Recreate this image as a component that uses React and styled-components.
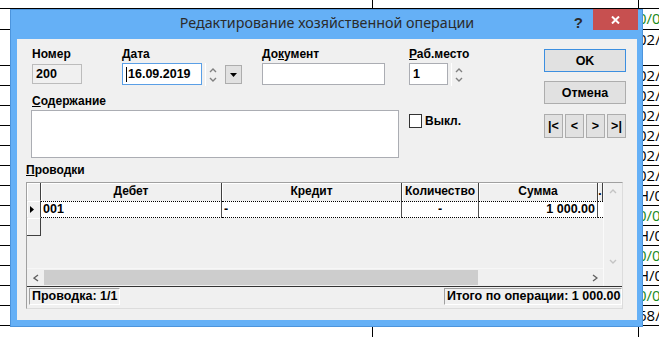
import React from 'react';
import styled, { createGlobalStyle } from 'styled-components';

const GlobalStyle = createGlobalStyle`
  html, body {
    margin: 0;
    padding: 0;
    background: #fff;
  }
  body {
    width: 659px;
    height: 337px;
    overflow: hidden;
    position: relative;
    font-family: "Liberation Sans", Arial, sans-serif;
  }
`;

// spreadsheet behind the dialog
const sheetRows = [
  { h: 9 },
  { h: 21, text: '0/0', green: true },
  { h: 36, text: '02/' },
  { h: 20, text: '02/' },
  { h: 20, text: '02/' },
  { h: 20, text: '02/' },
  { h: 20, text: '02/' },
  { h: 20, text: '02/' },
  { h: 20, text: '02/' },
  { h: 20, text: 'H/0' },
  { h: 20, text: '0/0', green: true },
  { h: 20, text: 'H/0' },
  { h: 20, text: '0/0', green: true },
  { h: 20, text: 'H/0' },
  { h: 20, text: '0/0', green: true },
  { h: 20, text: '68/' },
  { h: 11, last: true },
];

const Sheet = styled.div`
  display: flex;
  flex-direction: column;
`;

const SheetRow = styled.div`
  display: flex;
  height: ${p => p.$h}px;
  box-sizing: border-box;
  border-bottom: ${p => (p.$last ? 'none' : '1px solid #000')};
`;

const SheetCell = styled.div`
  width: ${p => p.$w}px;
  flex: ${p => (p.$w ? 'none' : 1)};
  box-sizing: border-box;
  border-right: ${p => (p.$w ? '1px solid #000' : 'none')};
  text-indent: -1px;
  font-family: "Open Sans", "Liberation Sans", sans-serif;
  font-size: 15px;
  line-height: 18px;
  color: ${p => (p.$green ? '#1a8a1a' : '#000')};
  white-space: nowrap;
  overflow: hidden;
`;

// dialog window
const Window = styled.div`
  position: absolute;
  left: 10px;
  top: 9px;
  width: 633px;
  height: 318px;
  box-sizing: border-box;
  background: #65b0f6;
  border: 1px solid #4c94dc;
  padding: 0 5px 6px 6px;
  display: flex;
  flex-direction: column;
`;

const TitleBar = styled.div`
  height: 29px;
  display: grid;
  grid-template-columns: 1fr auto 1fr;
  align-items: start;
`;

const Title = styled.div`
  grid-column: 2;
  margin-top: 3px;
  font-family: "Noto Sans", "Liberation Sans", sans-serif;
  font-size: 14.3px;
  line-height: 20px;
  color: #2b2b2b;
  white-space: nowrap;
`;

const TitleControls = styled.div`
  grid-column: 3;
  justify-self: end;
  display: flex;
  align-items: flex-start;
  margin-right: -1px;
`;

const HelpMark = styled.span`
  font-size: 15px;
  font-weight: bold;
  line-height: 18px;
  margin-top: 4px;
  margin-right: 10px;
  color: #2b2b2b;
`;

const CloseButton = styled.div`
  width: 45px;
  height: 21px;
  margin-top: -1px;
  background: #c75050;
  display: flex;
  align-items: center;
  justify-content: center;
`;

const Client = styled.div`
  flex: 1;
  background: #f0f0f0;
  padding: 8px 11px 0 9px;
  display: flex;
  flex-direction: column;
`;

const TopSection = styled.div`
  display: flex;
  justify-content: space-between;
  padding-left: 6px;
`;

const FormArea = styled.div`
  display: flex;
  flex-direction: column;
`;

const FieldRow = styled.div`
  display: grid;
  grid-template-columns: 90px 140px 147px auto;
`;

const FieldGroup = styled.div`
  display: flex;
  flex-direction: column;
`;

const Label = styled.div`
  font-size: 12px;
  font-weight: bold;
  line-height: 14px;
  height: 14px;
  margin-bottom: ${p => p.$mb ?? 2}px;
  color: #000;
  white-space: nowrap;
  u {
    text-decoration-thickness: 1px;
    text-underline-offset: 1px;
  }
`;

const InputLine = styled.div`
  display: flex;
  align-items: flex-start;
`;

const TextBox = styled.div`
  width: ${p => p.$w}px;
  height: ${p => p.$h || 22}px;
  margin-top: ${p => p.$mt || 0}px;
  margin-left: ${p => p.$ml || 0}px;
  box-sizing: border-box;
  border: 1px solid ${p => (p.$focus ? '#5a9fe6' : p.$disabled ? '#bcbcbc' : '#abadb3')};
  background: ${p => (p.$disabled ? '#f0f0f0' : '#fff')};
  padding: 0 3px;
  font-size: 12.5px;
  font-weight: bold;
  line-height: ${p => (p.$h || 22) - 2}px;
  color: #000;
  white-space: nowrap;
  display: flex;
  align-items: center;
`;

const Caret = styled.span`
  display: inline-block;
  width: 1px;
  height: 15px;
  background: #000;
  margin-right: 1px;
`;

const Spinner = styled.div`
  width: 13px;
  height: 23px;
  margin-left: 3px;
  border-left: 1px solid #fff;
  display: flex;
  flex-direction: column;
  align-items: center;
  justify-content: center;
  gap: 4px;
`;

const DropButton = styled.div`
  width: 17px;
  height: 19px;
  margin-left: 6px;
  margin-top: 2px;
  box-sizing: border-box;
  background: #e1e1e1;
  border: 1px solid #adadad;
  display: flex;
  align-items: center;
  justify-content: center;
`;

const ContentRow = styled.div`
  display: flex;
  align-items: flex-start;
  margin-top: 8px;
`;

const ContentCol = styled.div`
  display: flex;
  flex-direction: column;
`;

const CheckRow = styled.div`
  display: flex;
  align-items: center;
  margin-left: 10px;
  margin-top: 20px;
`;

const CheckBox = styled.div`
  width: 13px;
  height: 14px;
  box-sizing: border-box;
  border: 1px solid #333;
  background: #fff;
`;

const CheckLabel = styled.span`
  margin-left: 3px;
  font-size: 12px;
  font-weight: bold;
  color: #000;
`;

const ButtonCol = styled.div`
  width: 82px;
  margin-top: 2px;
  display: flex;
  flex-direction: column;
`;

const Button = styled.div`
  height: ${p => p.$h || 23}px;
  width: ${p => p.$w || 82}px;
  margin-top: ${p => p.$mt || 0}px;
  box-sizing: border-box;
  background: #e1e1e1;
  border: 1px solid ${p => (p.$default ? '#3c8fe0' : '#adadad')};
  display: flex;
  align-items: center;
  justify-content: center;
  font-size: 12.5px;
  font-weight: bold;
  color: #000;
`;

const NavRow = styled.div`
  display: flex;
  gap: 2px;
  margin-top: 10px;
`;

const SectionLabel = styled(Label)`
  margin-top: 5px;
`;

const GridFrame = styled.div`
  width: 597px;
  height: 127px;
  box-sizing: border-box;
  border: 1px solid #a0a0a0;
  border-right-color: #dcdcdc;
  border-bottom-color: #dcdcdc;
  display: flex;
  flex-direction: column;
`;

const GridBody = styled.div`
  height: 104px;
  box-sizing: border-box;
  border-bottom: 1px solid #333;
  display: flex;
`;

const GridMain = styled.div`
  width: 576px;
  display: flex;
  flex-direction: column;
`;

const GridRow = styled.div`
  display: flex;
  height: ${p => p.$h}px;
`;

const HeaderCell = styled.div`
  width: ${p => p.$w}px;
  flex: none;
  box-sizing: border-box;
  border-right: 1px solid #404040;
  box-shadow: inset 1px 1px #fff;
  background: #f0f0f0;
  font-size: 12px;
  font-weight: bold;
  line-height: 17px;
  text-align: center;
  color: #000;
  overflow: hidden;
  white-space: nowrap;
`;

const IndicatorCell = styled.div`
  width: 14px;
  flex: none;
  box-sizing: border-box;
  background: #f0f0f0;
  border-right: 1px solid #404040;
  border-bottom: 1px solid ${p => (p.$end ? '#404040' : '#f0f0f0')};
  box-shadow: inset 1px 1px #fff;
  display: flex;
  align-items: center;
  padding-left: 3px;
`;

const DataCell = styled.div`
  width: ${p => p.$w}px;
  flex: none;
  box-sizing: border-box;
  background: #fff;
  border-top: 1px dotted #000;
  border-bottom: 1px dotted #000;
  border-right: ${p => (p.$open ? 'none' : '1px solid #505050')};
  padding: 0 2px;
  font-size: 12.5px;
  font-weight: bold;
  line-height: 15px;
  color: #000;
  text-align: ${p => p.$align || 'left'};
  white-space: nowrap;
  overflow: hidden;
`;

const GridSpacer = styled.div`
  flex: 1;
`;

const HScroll = styled.div`
  height: 17px;
  display: flex;
  align-items: stretch;
  border-top: 1px solid #f7f7f7;
`;

const ScrollArrow = styled.div`
  width: 17px;
  flex: none;
  display: flex;
  align-items: center;
  justify-content: center;
`;

const Thumb = styled.div`
  width: ${p => p.$w}px;
  background: #cdcdcd;
  margin: 1px 0;
`;

const Track = styled.div`
  flex: 1;
`;

const VScroll = styled.div`
  flex: 1;
  display: flex;
  flex-direction: column;
  border-left: 1px solid #fafafa;
`;

const VTrack = styled.div`
  height: 86px;
  display: flex;
  flex-direction: column;
  justify-content: space-between;
  align-items: center;
  padding: 6px 0 5px;
  box-sizing: border-box;
`;

const StatusBar = styled.div`
  flex: 1;
  display: flex;
  justify-content: space-between;
  align-items: flex-start;
  padding: 1px 0 0 2px;
`;

const StatusPanel = styled.div`
  width: ${p => p.$w}px;
  height: 17px;
  box-sizing: border-box;
  border: 1px solid #a0a0a0;
  border-right-color: #fff;
  border-bottom-color: #fff;
  padding-left: 2px;
  font-size: 12.5px;
  font-weight: bold;
  line-height: 15px;
  color: #000;
  white-space: nowrap;
`;

const Chevron = ({ dir, color = '#808080', w = 8, h = 5 }) => {
  const pts = {
    up: `1,${h - 1} ${w / 2},1 ${w - 1},${h - 1}`,
    down: `1,1 ${w / 2},${h - 1} ${w - 1},1`,
    left: `${w - 1},1 1,${h / 2} ${w - 1},${h - 1}`,
    right: `1,1 ${w - 1},${h / 2} 1,${h - 1}`,
  }[dir];
  return (
    <svg width={w} height={h} viewBox={`0 0 ${w} ${h}`}>
      <polyline points={pts} fill="none" stroke={color} strokeWidth="1.4" />
    </svg>
  );
};

const columns = [
  { title: 'Дебет', w: 181 },
  { title: 'Кредит', w: 180 },
  { title: 'Количество', w: 77 },
  { title: 'Сумма', w: 119 },
];

const rowValues = [
  { text: '001' },
  { text: '-' },
  { text: '-', align: 'center' },
  { text: '1 000.00', align: 'right' },
];

export default function App() {
  return (
    <>
      <GlobalStyle />
      <Sheet>
        {sheetRows.map((r, i) => (
          <SheetRow key={i} $h={r.h} $last={r.last}>
            <SheetCell $w={373} />
            <SheetCell $w={266} />
            <SheetCell $green={r.green}>{r.text}</SheetCell>
          </SheetRow>
        ))}
      </Sheet>

      <Window>
        <TitleBar>
          <Title>Редактирование хозяйственной операции</Title>
          <TitleControls>
            <HelpMark>?</HelpMark>
            <CloseButton>
              <svg width="9" height="8" viewBox="0 0 9 8">
                <path d="M1 0.5 L8 7.5 M8 0.5 L1 7.5" stroke="#fff" strokeWidth="2" />
              </svg>
            </CloseButton>
          </TitleControls>
        </TitleBar>

        <Client>
          <TopSection>
            <FormArea>
              <FieldRow>
                <FieldGroup>
                  <Label>Номер</Label>
                  <TextBox $w={50} $h={20} $mt={1} $disabled>200</TextBox>
                </FieldGroup>
                <FieldGroup>
                  <Label><u>Д</u>ата</Label>
                  <InputLine>
                    <TextBox $w={80} $focus><Caret />16.09.2019</TextBox>
                    <Spinner>
                      <Chevron dir="up" />
                      <Chevron dir="down" />
                    </Spinner>
                    <DropButton>
                      <svg width="7" height="4" viewBox="0 0 7 4">
                        <polygon points="0,0 7,0 3.5,4" fill="#000" />
                      </svg>
                    </DropButton>
                  </InputLine>
                </FieldGroup>
                <FieldGroup>
                  <Label>До<u>к</u>умент</Label>
                  <TextBox $w={123} />
                </FieldGroup>
                <FieldGroup>
                  <Label><u>Р</u>аб.место</Label>
                  <InputLine>
                    <TextBox $w={39}>1</TextBox>
                    <Spinner>
                      <Chevron dir="up" />
                      <Chevron dir="down" />
                    </Spinner>
                  </InputLine>
                </FieldGroup>
              </FieldRow>

              <ContentRow>
                <ContentCol>
                  <Label><u>С</u>одержание</Label>
                  <TextBox $w={368} $h={48} $ml={-1} />
                </ContentCol>
                <CheckRow>
                  <CheckBox />
                  <CheckLabel>Выкл.</CheckLabel>
                </CheckRow>
              </ContentRow>
            </FormArea>

            <ButtonCol>
              <Button $default>OK</Button>
              <Button $mt={9}>Отмена</Button>
              <NavRow>
                <Button $w={19} $h={24}>|&lt;</Button>
                <Button $w={19} $h={24}>&lt;</Button>
                <Button $w={19} $h={24}>&gt;</Button>
                <Button $w={19} $h={24}>&gt;|</Button>
              </NavRow>
            </ButtonCol>
          </TopSection>

          <SectionLabel $mb={5}><u>П</u>роводки</SectionLabel>

          <GridFrame>
            <GridBody>
              <GridMain>
                <GridRow $h={18}>
                  <IndicatorCell />
                  {columns.map(c => (
                    <HeaderCell key={c.title} $w={c.w}>{c.title}</HeaderCell>
                  ))}
                  <HeaderCell $w={5}>.</HeaderCell>
                </GridRow>
                <GridRow $h={17}>
                  <IndicatorCell>
                    <svg width="4" height="7" viewBox="0 0 4 7">
                      <polygon points="0,0 4,3.5 0,7" fill="#000" />
                    </svg>
                  </IndicatorCell>
                  {columns.map((c, i) => (
                    <DataCell key={c.title} $w={c.w} $align={rowValues[i].align}>
                      {rowValues[i].text}
                    </DataCell>
                  ))}
                  <DataCell $w={5} $open />
                </GridRow>
                <GridRow $h={18}>
                  <IndicatorCell $end />
                </GridRow>
                <GridSpacer />
                <HScroll>
                  <ScrollArrow>
                    <Chevron dir="left" color="#606060" w={6} h={8} />
                  </ScrollArrow>
                  <Thumb $w={434} />
                  <Track />
                  <ScrollArrow>
                    <Chevron dir="right" color="#606060" w={6} h={8} />
                  </ScrollArrow>
                </HScroll>
              </GridMain>
              <VScroll>
                <VTrack>
                  <Chevron dir="up" color="#c4c4c4" />
                  <Chevron dir="down" color="#c4c4c4" />
                </VTrack>
              </VScroll>
            </GridBody>
            <StatusBar>
              <StatusPanel $w={91}>Проводка: 1/1</StatusPanel>
              <StatusPanel $w={178}>Итого по операции: 1 000.00</StatusPanel>
            </StatusBar>
          </GridFrame>
        </Client>
      </Window>
    </>
  );
}
